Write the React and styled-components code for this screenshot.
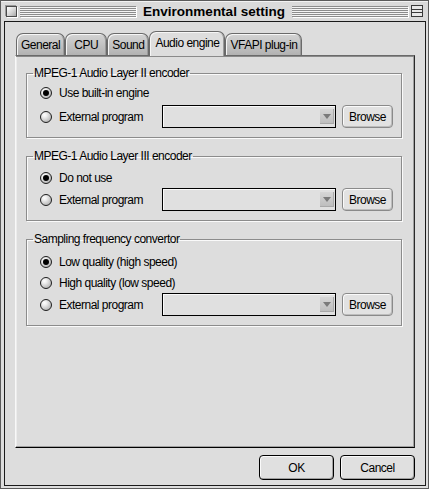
import React from "react";
import styled, { createGlobalStyle } from "styled-components";

const GlobalStyle = createGlobalStyle`
  html, body { margin: 0; padding: 0; background: #dddddd; }
  body {
    font-family: "Liberation Sans", Arial, sans-serif;
    font-size: 12px;
    letter-spacing: -0.5px;
    color: #000;
  }
`;

const Window = styled.div`
  width: 429px;
  height: 489px;
  box-sizing: border-box;
  border: 1px solid #5a5a5a;
  background: #dddddd;
  display: flex;
  flex-direction: column;
`;

const TitleBar = styled.div`
  height: 20px;
  flex: none;
  display: flex;
  align-items: center;
  padding: 0 5px;
  gap: 3px;
  background: #dadada;
  box-shadow: inset 0 1px 0 #f2f2f2;
`;

const BoxButton = styled.div`
  width: 11px;
  height: 11px;
  flex: none;
  box-sizing: border-box;
  border: 1px solid #4a4a4a;
  background: linear-gradient(135deg, #ffffff 0%, #d0d0d0 60%, #a8a8a8 100%);
  box-shadow: 1px 1px 0 #ffffff, -1px -1px 0 #9a9a9a;
`;

const Stripes = styled.div`
  flex: 1;
  height: 11px;
  background: repeating-linear-gradient(to bottom, #8c8c8c 0 1px, #f4f4f4 1px 2px);
  box-shadow: 1px 1px 0 #fff;
`;

const Title = styled.div`
  font-weight: bold;
  font-size: 13.5px;
  letter-spacing: 0;
  padding: 0 4px;
  white-space: nowrap;
`;

const Frame = styled.div`
  flex: 1;
  display: flex;
  padding: 0 2px 2px 3px;
`;

const Body = styled.div`
  flex: 1;
  display: flex;
  flex-direction: column;
  border: 1px solid #1a1a1a;
  padding: 9px 10px 5px;
`;

const TabRow = styled.div`
  height: 24px;
  display: flex;
  align-items: flex-end;
  padding-left: 1px;
`;

const Tab = styled.div`
  height: ${({ $active }) => ($active ? 25 : 22)}px;
  margin-bottom: ${({ $active }) => ($active ? -1 : 0)}px;
  min-width: 42px;
  box-sizing: border-box;
  padding: 0 ${({ $active }) => ($active ? 5 : 4)}px ${({ $active }) => ($active ? 2 : 0)}px;
  display: flex;
  align-items: center;
  justify-content: center;
  border: 1px solid #6a6a6a;
  border-bottom: none;
  border-radius: 7px 7px 0 0;
  background: ${({ $active }) =>
    $active ? "#dddddd" : "linear-gradient(#d4d4d4, #b2b2b2)"};
  box-shadow: inset 1px 1px 0 #f6f6f6, inset -1px 0 0 #9a9a9a;
  position: relative;
  z-index: ${({ $active }) => ($active ? 2 : 1)};
  white-space: nowrap;
`;

const Panel = styled.div`
  flex: 1;
  display: flex;
  flex-direction: column;
  gap: 11px;
  border-style: solid;
  border-width: 1px;
  border-color: #6a6a6a #2a2a2a #000 #f8f8f8;
  box-shadow: inset 0 1px 0 #8a8a8a, inset -1px -1px 0 #a0a0a0, inset 1px 0 0 #ececec;
  padding: 10px 12px 0 10px;
`;

const Group = styled.fieldset`
  margin: 0;
  padding: 0 8px ${({ $pad }) => $pad}px 13px;
  min-inline-size: 0;
  border: 1px solid #8c8c8c;
  box-shadow: 1px 1px 0 #fafafa, inset 1px 1px 0 #fafafa;
  display: flex;
  flex-direction: column;
`;

const Legend = styled.legend`
  margin-left: -7px;
  padding: 0 1px;
  line-height: 14px;
`;

const Rows = styled.div`
  display: flex;
  flex-direction: column;
  gap: ${({ $gap }) => $gap}px;
  padding-top: ${({ $top }) => $top}px;
`;

const Row = styled.div`
  height: ${({ $tall }) => ($tall ? 23 : 21)}px;
  display: flex;
  align-items: center;
`;

const Option = styled.label`
  display: flex;
  align-items: center;
  gap: 7px;
  width: ${({ $w }) => ($w ? `${$w}px` : "auto")};
  flex: none;
`;

const Radio = styled.span`
  width: 12px;
  height: 12px;
  flex: none;
  box-sizing: border-box;
  border-radius: 50%;
  border: 1px solid #1e1e1e;
  background: radial-gradient(circle at 35% 30%, #ffffff 0, #ededed 25%, #b4b4b4 80%, #8e8e8e 100%);
  position: relative;
  &::after {
    content: "";
    display: ${({ $checked }) => ($checked ? "block" : "none")};
    position: absolute;
    inset: 2px;
    border-radius: 50%;
    background: #000;
  }
`;

const Combo = styled.div`
  width: 174px;
  height: 23px;
  flex: none;
  box-sizing: border-box;
  border: 1px solid #000;
  background: #e0e0e0;
  box-shadow: inset 1px 1px 0 #fafafa;
  display: flex;
  align-items: center;
  justify-content: flex-end;
  padding-right: 1px;
`;

const ComboArrow = styled.span`
  width: 14px;
  height: 15px;
  background: linear-gradient(#d6d6d6, #bcbcbc);
  box-shadow: inset -1px -1px 0 #a8a8a8;
  display: flex;
  align-items: center;
  justify-content: center;
  &::before {
    content: "";
    border-left: 4px solid transparent;
    border-right: 4px solid transparent;
    border-top: 5px solid #7a7a7a;
  }
`;

const Browse = styled.div`
  width: 51px;
  height: 23px;
  margin-left: 6px;
  flex: none;
  box-sizing: border-box;
  border: 1px solid #8a8a8a;
  border-radius: 4px;
  background: #e2e2e2;
  box-shadow: inset 1px 1px 0 #fafafa, inset -1px -1px 0 #bdbdbd;
  display: flex;
  align-items: center;
  justify-content: center;
`;

const Footer = styled.div`
  display: flex;
  justify-content: flex-end;
  gap: 6px;
  margin-top: 7px;
`;

const DialogButton = styled.div`
  width: 75px;
  height: 25px;
  box-sizing: border-box;
  border: 1px solid #000;
  border-radius: 4px;
  background: #e0e0e0;
  box-shadow: inset 1px 1px 0 #fafafa, inset -1px -1px 0 #a0a0a0;
  display: flex;
  align-items: center;
  justify-content: center;
`;

const CollapseBox = () => (
  <svg width="12" height="12" viewBox="0 0 12 12" style={{ flex: "none" }}>
    <rect x="0.5" y="0.5" width="11" height="11" fill="#e8e8e8" stroke="#3a3a3a" />
    <line x1="1" y1="4.5" x2="11" y2="4.5" stroke="#3a3a3a" />
    <line x1="1" y1="7.5" x2="11" y2="7.5" stroke="#3a3a3a" />
  </svg>
);

const tabs = ["General", "CPU", "Sound", "Audio engine", "VFAPI plug-in"];

const groups = [
  {
    title: "MPEG-1 Audio Layer II encoder",
    top: 2,
    gap: 2,
    pad: 9,
    options: ["Use built-in engine"],
  },
  {
    title: "MPEG-1 Audio Layer III encoder",
    top: 4,
    gap: 0,
    pad: 9,
    options: ["Do not use"],
  },
  {
    title: "Sampling frequency convertor",
    top: 5,
    gap: 0,
    pad: 9,
    options: ["Low quality (high speed)", "High quality (low speed)"],
  },
];

const App = () => {
  return (
    <>
      <GlobalStyle />
      <Window>
        <TitleBar>
          <BoxButton />
          <Stripes />
          <Title>Environmental setting</Title>
          <Stripes />
          <CollapseBox />
        </TitleBar>
        <Frame>
          <Body>
            <TabRow>
              {tabs.map((t) => (
                <Tab key={t} $active={t === "Audio engine"}>
                  {t}
                </Tab>
              ))}
            </TabRow>
            <Panel>
              {groups.map((g) => (
                <Group key={g.title} $pad={g.pad}>
                  <Legend>{g.title}</Legend>
                  <Rows $top={g.top} $gap={g.gap}>
                    {g.options.map((o, i) => (
                      <Row key={o}>
                        <Option>
                          <Radio $checked={i === 0} />
                          {o}
                        </Option>
                      </Row>
                    ))}
                    <Row $tall>
                      <Option $w={122}>
                        <Radio />
                        External program
                      </Option>
                      <Combo>
                        <ComboArrow />
                      </Combo>
                      <Browse>Browse</Browse>
                    </Row>
                  </Rows>
                </Group>
              ))}
            </Panel>
            <Footer>
              <DialogButton>OK</DialogButton>
              <DialogButton>Cancel</DialogButton>
            </Footer>
          </Body>
        </Frame>
      </Window>
    </>
  );
};

export default App;
